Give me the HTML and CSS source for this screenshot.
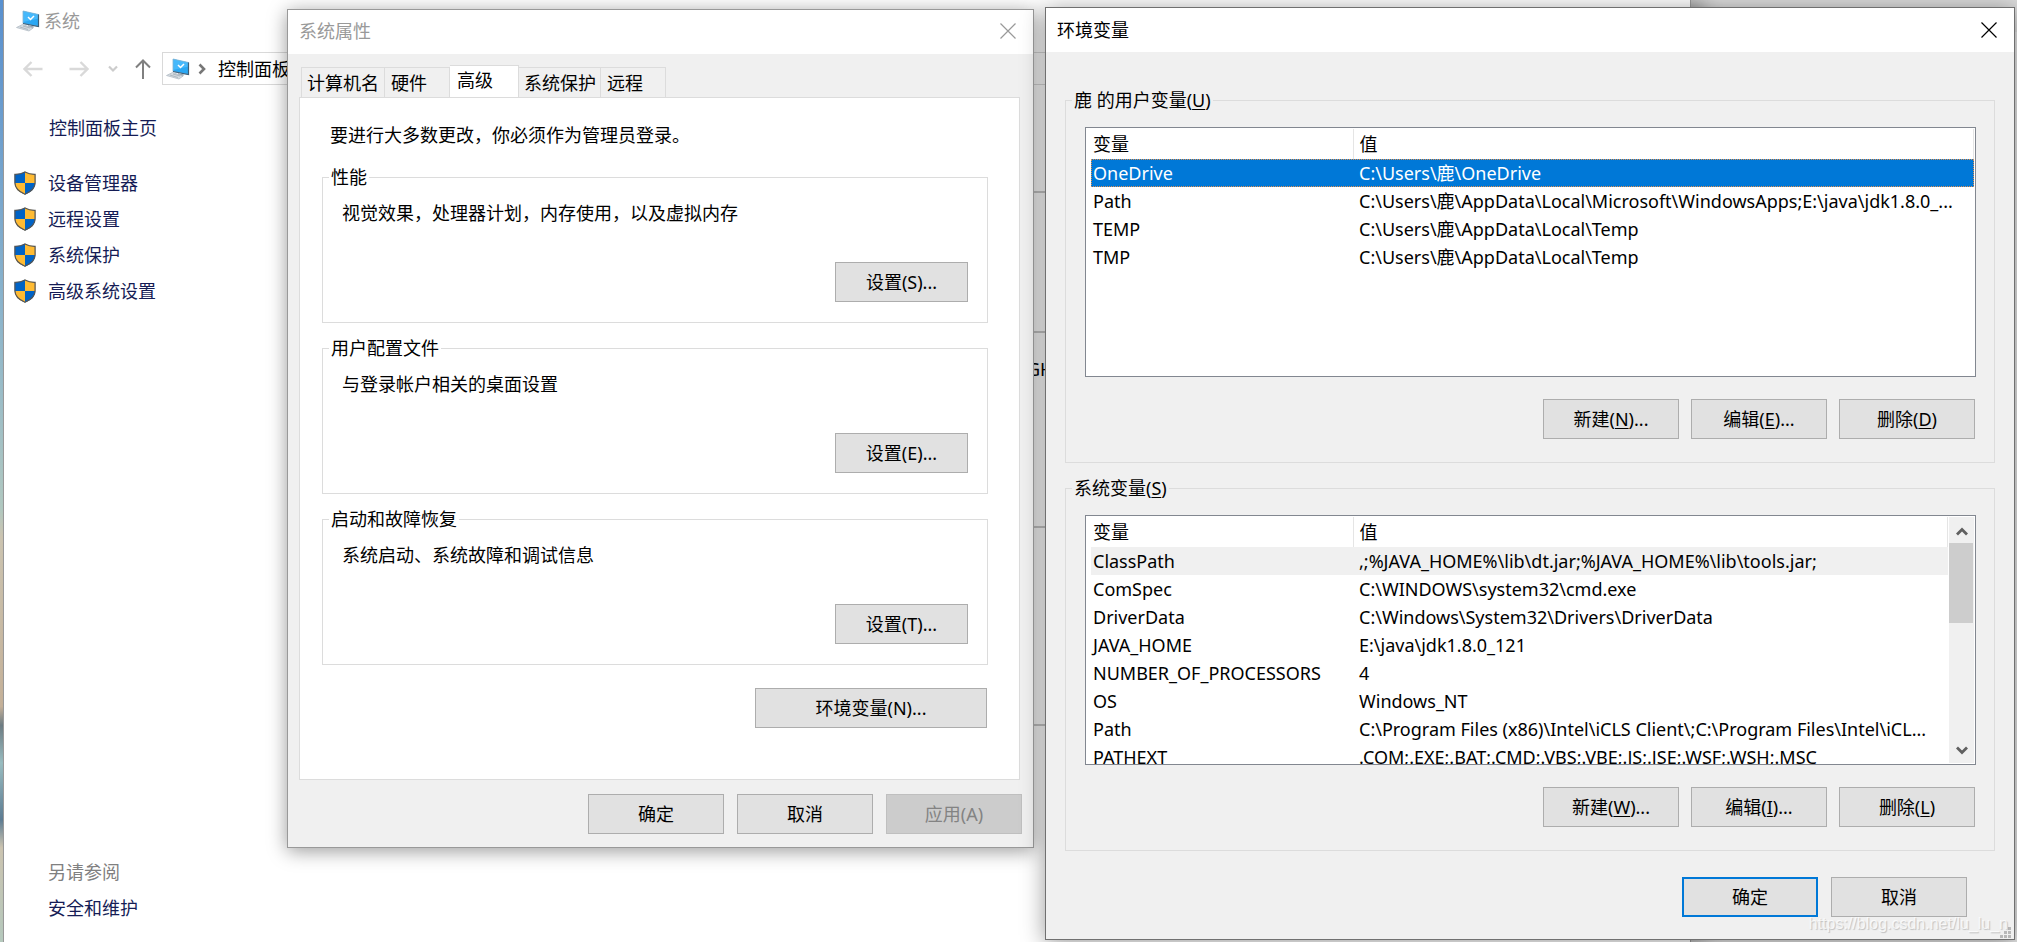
FILE: index.html
```html
<!DOCTYPE html>
<html lang="zh-CN">
<head>
<meta charset="utf-8">
<title>环境变量</title>
<link rel="stylesheet" href="styles.css">
</head>
<body>
<svg class="defs" width="0" height="0" aria-hidden="true">
  <symbol id="pc" viewBox="0 0 24 22">
    <path d="M7 1 22.500 4.500v12L7 13.500z" fill="#2aa7f3"/>
    <path d="M7 1 22.500 4.500v4L7 12z" fill="#45b8fb"/>
    <path d="M7 1 22.500 4.500v12L7 13.500z" fill="none" stroke="#7fb4d4" stroke-width=".8"/>
    <path d="M22.500 4.500v12L7 13.500" fill="none" stroke="#3d5f78" stroke-width="1.200"/>
    <path d="m12 7 2.500 2.500L18 6" fill="none" stroke="#fff" stroke-width="1.500"/>
    <path d="m12 15 6 1.500-1 2-5-1z" fill="#9aa6b0"/>
    <path d="m.5 17.500 6-3L17 18l-4 3z" fill="#d5dbe0" stroke="#b4bdc5" stroke-width=".8"/>
    <path d="m4 17 8 2.500M7 16l7 2" stroke="#9ba7b1" stroke-width=".7"/>
  </symbol>
  <symbol id="shield" viewBox="0 0 22 24">
    <path d="M11 .6C8 2.400 4.500 3.300.7 3.200v8.300c0 5.500 4 9.500 10.300 12z" fill="#0063c6"/>
    <path d="M11 .6c3 1.800 6.500 2.700 10.300 2.600v8.300c0 5.500-4 9.500-10.300 12z" fill="#ffbb33"/>
    <path d="M.7 12H11v11.500C4.700 21 .7 17.500.7 12z" fill="#ffbb33"/>
    <path d="M21.300 12H11v11.500c6.300-2.500 10.300-6 10.300-11.500z" fill="#0063c6"/>
    <path d="M11 .9C8 2.600 4.500 3.400.9 3.300v8.200c0 5.500 4 9.200 10.100 11.700 6.100-2.500 10.100-6.200 10.100-11.700V3.300C17.500 3.400 14 2.600 11 .9z" fill="none" stroke="#555" stroke-width="1.200"/>
  </symbol>
  <symbol id="cross" viewBox="0 0 16 16"><path d="m.5.500 15 15m0-15-15 15" fill="none" stroke="currentColor" stroke-width="1.200"/></symbol>
</svg>

<div class="other-window"></div>

<main class="system">
  <header class="system-title"><svg class="pc"><use href="#pc"/></svg><span>系统</span></header>
  <nav class="toolbar">
    <button class="nav" aria-label="后退"><svg width="20" height="16" viewBox="0 0 20 16"><path d="M8.500 1 1.500 8l7 7M2 8h17.500" fill="none" stroke="#d9d9d9" stroke-width="2.400"/></svg></button>
    <button class="nav" aria-label="前进"><svg width="20" height="16" viewBox="0 0 20 16"><path d="m11.500 1 7 7-7 7M18 8H.5" fill="none" stroke="#d9d9d9" stroke-width="2.400"/></svg></button>
    <button class="nav nav-recent" aria-label="最近"><svg width="10" height="8" viewBox="0 0 10 8"><path d="m1 1.500 4 4 4-4" fill="none" stroke="#ccc" stroke-width="2.200"/></svg></button>
    <button class="nav nav-up" aria-label="上移"><svg width="16" height="20" viewBox="0 0 16 20"><path d="m1 8.500 7-7 7 7M8 2v18" fill="none" stroke="#808080" stroke-width="2"/></svg></button>
    <div class="address"><svg class="pc"><use href="#pc"/></svg><svg class="crumb" viewBox="0 0 8 12"><path d="m1.500 1.500 4.500 4.500-4.500 4.500" fill="none" stroke="#777" stroke-width="2.600"/></svg><span>控制面板</span></div>
  </nav>
  <div class="system-body">
    <aside class="side">
      <a class="home" href="#">控制面板主页</a>
      <a class="task" href="#"><svg class="shield"><use href="#shield"/></svg>设备管理器</a>
      <a class="task" href="#"><svg class="shield"><use href="#shield"/></svg>远程设置</a>
      <a class="task" href="#"><svg class="shield"><use href="#shield"/></svg>系统保护</a>
      <a class="task" href="#"><svg class="shield"><use href="#shield"/></svg>高级系统设置</a>
      <div class="see-also"><span>另请参阅</span><a href="#">安全和维护</a></div>
    </aside>
    <div class="details"><section></section><section></section><section class="cpu">GHz</section><section></section><section></section></div>
  </div>
</main>

<div class="dialog properties" role="dialog" aria-label="系统属性">
  <header class="caption inactive"><span>系统属性</span><button class="close" aria-label="关闭"><svg><use href="#cross"/></svg></button></header>
  <div class="tabs" role="tablist">
    <button class="tab tab-name" role="tab">计算机名</button><button class="tab tab-short" role="tab">硬件</button><button class="tab selected" role="tab" aria-selected="true">高级</button><button class="tab tab-name" role="tab">系统保护</button><button class="tab tab-short" role="tab">远程</button>
  </div>
  <div class="page">
    <p class="intro">要进行大多数更改，你必须作为管理员登录。</p>
    <fieldset class="option"><legend>性能</legend><p>视觉效果，处理器计划，内存使用，以及虚拟内存</p><button class="btn">设置(S)...</button></fieldset>
    <fieldset class="option"><legend>用户配置文件</legend><p>与登录帐户相关的桌面设置</p><button class="btn">设置(E)...</button></fieldset>
    <fieldset class="option"><legend>启动和故障恢复</legend><p>系统启动、系统故障和调试信息</p><button class="btn">设置(T)...</button></fieldset>
    <button class="btn btn-env">环境变量(N)...</button>
  </div>
  <footer class="actions"><button class="btn">确定</button><button class="btn">取消</button><button class="btn" disabled>应用(A)</button></footer>
</div>

<div class="dialog environment" role="dialog" aria-label="环境变量">
  <header class="caption"><span>环境变量</span><button class="close" aria-label="关闭"><svg><use href="#cross"/></svg></button></header>
  <fieldset class="vars">
    <legend>鹿 的用户变量(<u>U</u>)</legend>
    <div class="list">
      <table>
        <thead><tr><th>变量</th><th>值</th></tr></thead>
        <tbody>
          <tr class="active"><td>OneDrive</td><td>C:\Users\鹿\OneDrive</td></tr>
          <tr><td>Path</td><td>C:\Users\鹿\AppData\Local\Microsoft\WindowsApps;E:\java\jdk1.8.0_...</td></tr>
          <tr><td>TEMP</td><td>C:\Users\鹿\AppData\Local\Temp</td></tr>
          <tr><td>TMP</td><td>C:\Users\鹿\AppData\Local\Temp</td></tr>
        </tbody>
      </table>
    </div>
    <div class="row"><button class="btn">新建(<u>N</u>)...</button><button class="btn">编辑(<u>E</u>)...</button><button class="btn">删除(<u>D</u>)</button></div>
  </fieldset>
  <fieldset class="vars">
    <legend>系统变量(<u>S</u>)</legend>
    <div class="list">
      <table>
        <thead><tr><th>变量</th><th>值</th></tr></thead>
        <tbody>
          <tr class="hover"><td>ClassPath</td><td>,;%JAVA_HOME%\lib\dt.jar;%JAVA_HOME%\lib\tools.jar;</td></tr>
          <tr><td>ComSpec</td><td>C:\WINDOWS\system32\cmd.exe</td></tr>
          <tr><td>DriverData</td><td>C:\Windows\System32\Drivers\DriverData</td></tr>
          <tr><td>JAVA_HOME</td><td>E:\java\jdk1.8.0_121</td></tr>
          <tr><td>NUMBER_OF_PROCESSORS</td><td>4</td></tr>
          <tr><td>OS</td><td>Windows_NT</td></tr>
          <tr><td>Path</td><td>C:\Program Files (x86)\Intel\iCLS Client\;C:\Program Files\Intel\iCL...</td></tr>
          <tr><td>PATHEXT</td><td>.COM;.EXE;.BAT;.CMD;.VBS;.VBE;.JS;.JSE;.WSF;.WSH;.MSC</td></tr>
        </tbody>
      </table>
      <div class="scroll">
        <button aria-label="向上滚动"><svg viewBox="0 0 12 10"><path d="m1 7.500 5-5 5 5" fill="none" stroke="#606060" stroke-width="2.800"/></svg></button>
        <div class="thumb"></div>
        <button aria-label="向下滚动"><svg viewBox="0 0 12 10"><path d="m1 2.500 5 5 5-5" fill="none" stroke="#606060" stroke-width="2.800"/></svg></button>
      </div>
    </div>
    <div class="row"><button class="btn">新建(<u>W</u>)...</button><button class="btn">编辑(<u>I</u>)...</button><button class="btn">删除(<u>L</u>)</button></div>
  </fieldset>
  <footer class="actions"><button class="btn default">确定</button><button class="btn">取消</button></footer>
  <svg class="grip" viewBox="0 0 11 11"><path d="M8 0h3v3H8zM8 4h3v3H8zM8 8h3v3H8zM4 4h3v3H4zM4 8h3v3H4zM0 8h3v3H0z" fill="#b8b8b8"/></svg>
  <span class="watermark">https://blog.csdn.net/lu_lu_n</span>
</div>
</body>
</html>
```

FILE: styles.css
```css
* { box-sizing: border-box; }

body {
  margin: 0;
  min-height: 100vh;
  position: relative;
  overflow: hidden;
  font: 400 18px/24px "Noto Sans", "Noto Sans CJK SC", sans-serif;
  color: #000;
  background: linear-gradient(#5b93d3 0, #8fb8d0 33%, #b4ccc4 54%, #d0c8b4 57%, #c8b49c 75%, #6f7f86 77%, #9cc0c4 81%, #5f7f96 87%, #d0c8b4 90%, #b8ccc0);
}

button { font: inherit; color: inherit; }
p { margin: 0; }
a { color: #151c55; text-decoration: none; }
u { text-underline-offset: 2px; }
.defs { position: absolute; }

/* Windows on the desktop */
.other-window {
  position: absolute;
  inset: 0 0 0 auto;
  width: 326px;
  background: linear-gradient(#dcdcdc 32px, #e6e6e6 32px);
}

.system {
  position: absolute;
  inset: 0 326px 0 3px;
  display: flex;
  flex-direction: column;
  background: #fff;
  border: solid #999;
  border-width: 0 1px;
  box-shadow: 12px 0 18px rgba(0, 0, 0, .3);
}

.dialog {
  position: absolute;
  display: flex;
  flex-direction: column;
  background: #f0f0f0;
  border: 1px solid #999;
}

.properties {
  left: 287px;
  top: 9px;
  width: 747px;
  box-shadow: 0 3px 18px rgba(0, 0, 0, .4);
}

.environment {
  left: 1045px;
  right: 2px;
  top: 7px;
  border-color: #707070;
  box-shadow: 0 3px 22px rgba(0, 0, 0, .4);
}

/* System window */
.system-title {
  display: flex;
  align-items: center;
  gap: 4px;
  height: 42px;
  padding-left: 12px;
  color: #999;
}

.pc { width: 24px; height: 22px; flex: none; }

.toolbar {
  display: flex;
  align-items: center;
  height: 53px;
  padding-left: 19px;
}

.nav {
  display: flex;
  border: 0;
  padding: 0;
  margin-right: 26px;
  background: none;
}

.nav-recent { margin: 0 17px 0 -7px; }
.nav-up { margin-right: 11px; }

.address {
  flex: 1;
  display: flex;
  align-items: center;
  height: 33px;
  padding-left: 3px;
  border: 1px solid #d9d9d9;
}

.crumb { width: 8px; height: 12px; margin: 0 12px 0 8px; }

.system-body { flex: 1; display: flex; }

.side {
  width: 283px;
  display: flex;
  flex-direction: column;
  padding: 21px 0 22px 10px;
}

.home { margin: 0 0 25px 35px; }

.task {
  display: flex;
  align-items: center;
  gap: 12px;
  height: 36px;
}

.shield { width: 22px; height: 24px; }

.see-also {
  display: flex;
  flex-direction: column;
  gap: 12px;
  margin: auto 0 0 34px;
  color: #808080;
}

.details { flex: 1; padding: 0 20px 0 400px; }

.details section { border-bottom: 2px solid #c8c8c8; height: 198px; }
.details section:first-child { height: 98px; }
.details section:nth-child(2) { height: 140px; }
.details section:last-child { border: 0; }
.details .cpu { height: 195px; padding: 24px 0 0 340px; }

/* Dialog chrome */
.caption {
  display: flex;
  align-items: center;
  justify-content: space-between;
  height: 44px;
  padding: 0 17px 0 11px;
  background: #fff;
}

.caption.inactive { color: #999; padding-bottom: 2px; }

.close {
  display: flex;
  border: 0;
  padding: 0;
  background: none;
}

.close svg { width: 16px; height: 16px; }

.btn {
  width: 136px;
  height: 40px;
  padding: 0;
  border: 1px solid #adadad;
  background: #e1e1e1;
}

.btn.default { border: 2px solid #0078d7; }
.btn:disabled { color: #838383; background: #ccc; border-color: #bfbfbf; }

.actions {
  display: flex;
  justify-content: flex-end;
  gap: 13px;
}

fieldset {
  min-width: 0;
  margin: 0;
  border: 1px solid #dcdcdc;
}

legend { margin-left: -13px; padding: 0 2px; }

/* System properties */
.tabs {
  display: flex;
  align-items: flex-end;
  height: 43px;
  padding-left: 13px;
}

.tab {
  height: 30px;
  padding: 0 4px 0 5px;
  border: 1px solid #dcdcdc;
  border-width: 1px 1px 0 0;
  background: #f0f0f0;
  text-align: left;
}

.tab:first-child { border-left-width: 1px; width: 84px; }
.tab-name { width: 82px; }
.tab-short { width: 65px; padding-left: 6px; }

.tab.selected {
  width: 69px;
  height: 33px;
  margin-bottom: -1px;
  padding: 0 7px 4px;
  background: #fff;
}

.page {
  display: flex;
  flex-direction: column;
  margin: 0 13px 0 11px;
  padding: 25px 31px 51px 22px;
  border: 1px solid #dcdcdc;
  background: #fff;
}

.intro { padding-left: 8px; margin-bottom: 18px; }

.option {
  display: block;
  height: 158px;
  margin-bottom: 13px;
  padding: 12px 19px 20px;
}

.option p { margin-bottom: 37px; }
.option .btn { display: block; width: 133px; margin-left: auto; }
.btn-env { width: 232px; margin: 10px 1px 0 auto; }
.properties .actions { gap: 13px; padding: 14px 11px 13px; }

/* Environment variables */
.vars { margin: 36px 19px 0; padding: 15px 18px 23px 19px; }
.vars + .vars { margin-top: 13px; }

.list {
  display: flex;
  height: 250px;
  padding: 1px 1px 1px 5px;
  border: 1px solid #828790;
  background: #fff;
  overflow: hidden;
}

table {
  flex: 1;
  width: 100%;
  align-self: flex-start;
  table-layout: fixed;
  border-collapse: collapse;
}

th, td {
  height: 28px;
  padding: 0 0 0 6px;
  text-align: left;
  font-weight: inherit;
  white-space: nowrap;
}

th { height: 30px; border-right: 1px solid #e5e5e5; }
th:first-child { width: 262px; }
th:first-child, td:first-child { padding-left: 2px; }
.hover { background: #f0f0f0; }

.active {
  color: #fff;
  background: #0078d7;
  outline: 1px dotted #e09050;
  outline-offset: -1px;
}

.scroll {
  display: flex;
  flex-direction: column;
  width: 25px;
  margin-left: 1px;
  background: #f0f0f0;
}

.scroll button {
  display: flex;
  align-items: center;
  justify-content: center;
  height: 26px;
  padding: 4px 0 0;
  border: 0;
  background: none;
}

.scroll button:last-child { margin-top: auto; padding: 0; }
.scroll svg { width: 12px; height: 10px; }
.thumb { width: 24px; height: 80px; background: #cdcdcd; }

.row {
  display: flex;
  justify-content: flex-end;
  gap: 12px;
  margin-top: 22px;
  padding-right: 1px;
}

.environment .actions { padding: 26px 47px 22px; }

.grip {
  position: absolute;
  right: 3px;
  bottom: 1px;
  width: 11px;
  height: 11px;
}

.watermark {
  position: absolute;
  right: 6px;
  bottom: 3px;
  font: 16px/24px "Liberation Sans", sans-serif;
  color: rgba(255, 255, 255, .75);
  text-shadow: 1px 1px 1px rgba(0, 0, 0, .2);
}
```
